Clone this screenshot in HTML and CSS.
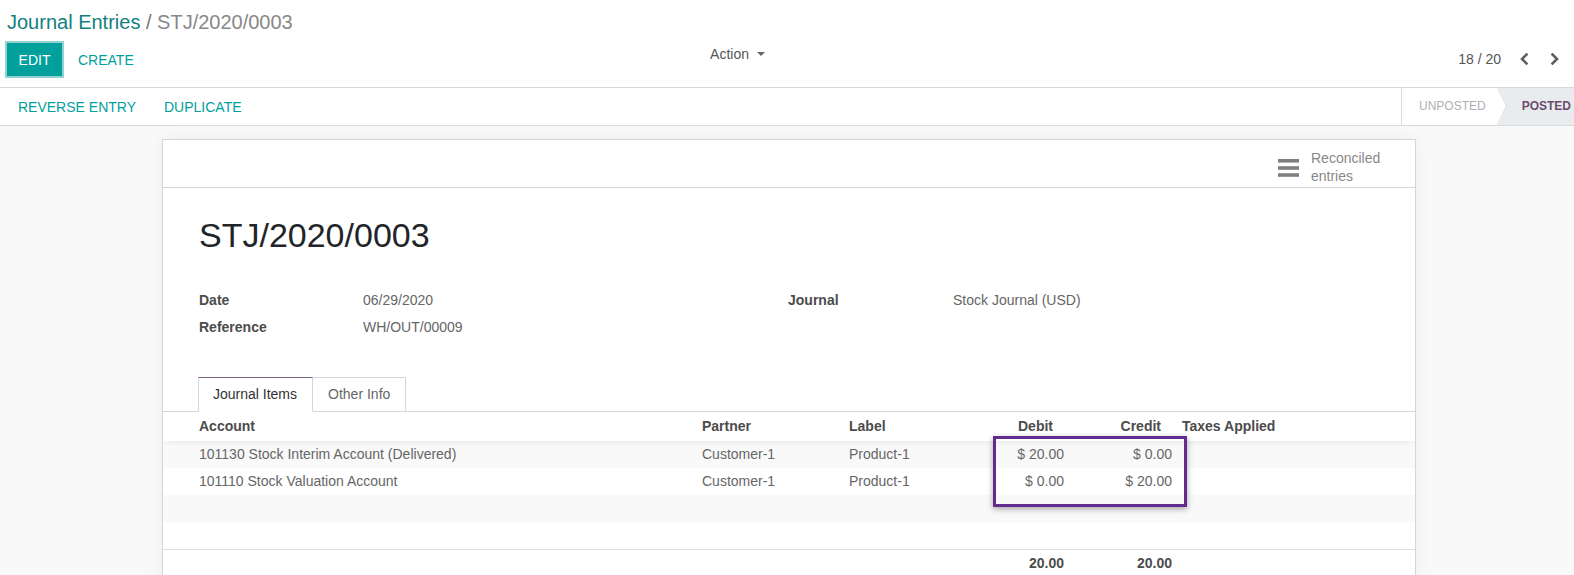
FILE: index.html
```html
<!DOCTYPE html>
<html lang="en">
<head>
<meta charset="utf-8">
<title>Journal Entries / STJ/2020/0003</title>
<link rel="stylesheet" href="styles.css">
</head>
<body>
<div class="cp">
  <div class="bc"><span class="bc-link">Journal Entries</span> / <span class="bc-cur">STJ/2020/0003</span></div>
  <div class="cp-row">
    <div class="cp-left">
      <div class="cp-btns">
        <button class="btn-edit">EDIT</button>
        <button class="btn-link">CREATE</button>
      </div>
      <div class="action">Action <span class="caret"></span></div>
    </div>
    <div class="cp-right">
      <span class="pager">18 / 20</span>
      <svg class="chev" width="10" height="12" viewBox="0 0 10 12"><polyline points="7.5,1.5 3,6 7.5,10.5" fill="none" stroke="#5f5f5f" stroke-width="2.6" stroke-linecap="square"/></svg>
      <svg class="chev chev-r" width="10" height="12" viewBox="0 0 10 12"><polyline points="2.5,1.5 7,6 2.5,10.5" fill="none" stroke="#5f5f5f" stroke-width="2.6" stroke-linecap="square"/></svg>
    </div>
  </div>
</div>
<div class="sbar">
  <div class="sbar-btns">
    <button class="btn-link sb">REVERSE ENTRY</button>
    <button class="btn-link sb">DUPLICATE</button>
  </div>
  <div class="status">
    <div class="st st-off">UNPOSTED</div>
    <div class="st st-on">POSTED</div>
  </div>
</div>
<div class="content">
  <div class="sheet">
    <div class="bbox">
      <div class="stat-btn">
        <svg class="bars" width="21" height="18" viewBox="0 0 21 18"><rect x="0" y="0" width="21" height="3.6" fill="#808080"/><rect x="0" y="7.2" width="21" height="3.6" fill="#808080"/><rect x="0" y="14.2" width="21" height="3.6" fill="#808080"/></svg>
        <div class="stat-txt">Reconciled<br>entries</div>
      </div>
    </div>
    <div class="sbody">
      <h1 class="title">STJ/2020/0003</h1>
      <div class="groups">
        <div class="grp">
          <div class="lbl">Date</div><div class="val">06/29/2020</div>
          <div class="lbl">Reference</div><div class="val">WH/OUT/00009</div>
        </div>
        <div class="grp">
          <div class="lbl">Journal</div><div class="val">Stock Journal (USD)</div>
        </div>
      </div>
    </div>
    <div class="tabs">
      <div class="tab tab-on">Journal Items</div>
      <div class="tab tab-off">Other Info</div>
    </div>
    <div class="tbl">
      <div class="tr th">
        <div>Account</div><div>Partner</div><div>Label</div><div class="num">Debit</div><div class="num">Credit</div><div class="tax">Taxes Applied</div>
      </div>
      <div class="tr odd">
        <div>101130 Stock Interim Account (Delivered)</div><div>Customer-1</div><div>Product-1</div><div class="num">$ 20.00</div><div class="num">$ 0.00</div><div class="tax"></div>
      </div>
      <div class="tr">
        <div>101110 Stock Valuation Account</div><div>Customer-1</div><div>Product-1</div><div class="num">$ 0.00</div><div class="num">$ 20.00</div><div class="tax"></div>
      </div>
      <div class="tr odd empty"></div>
      <div class="tr empty"></div>
      <div class="tr tf">
        <div></div><div></div><div></div><div class="num">20.00</div><div class="num">20.00</div><div class="tax"></div>
      </div>
      <div class="hl"></div>
    </div>
  </div>
</div>
</body>
</html>
```
FILE: styles.css
```css
html, body {
  margin: 0;
  padding: 0;
  height: 100%;
  overflow: hidden;
}
body {
  font-family: "Liberation Sans", Arial, sans-serif;
  font-size: 14px;
  color: #666666;
  background: #f9f9f9;
}
button {
  font-family: inherit;
  font-size: 14px;
  border: 0;
  background: none;
  cursor: pointer;
  padding: 0;
}

/* control panel */
.cp {
  background: #ffffff;
  border-bottom: 1px solid #d9d9d9;
  padding: 10px 0 0 7px;
  height: 77px;
  box-sizing: content-box;
}
.bc {
  font-size: 20px;
  line-height: 24px;
  color: #777777;
}
.bc-link { color: #12807e; }
.bc-cur { color: #888888; }
.cp-row {
  display: flex;
  margin-top: 9px;
  height: 35px;
}
.cp-left {
  width: 780px;
  display: flex;
  align-items: flex-start;
}
.cp-btns {
  display: flex;
  align-items: flex-start;
}
.btn-edit {
  background: #00a09d;
  color: #ffffff;
  height: 33px;
  width: 55px;
  box-shadow: 0 0 0 2px #92d3d1;
  text-align: center;
}
.btn-link {
  color: #00a09d;
  height: 33px;
  padding: 0 12px;
  margin-left: 4px;
}
.action {
  margin-left: auto;
  margin-right: 22px;
  margin-top: 1px;
  line-height: 20px;
  color: #555555;
  display: flex;
  align-items: center;
}
.caret {
  display: inline-block;
  width: 0;
  height: 0;
  border-left: 4px solid transparent;
  border-right: 4px solid transparent;
  border-top: 4px solid #666666;
  margin-left: 8px;
}
.cp-right {
  flex: 1;
  display: flex;
  justify-content: flex-end;
  align-items: flex-start;
  padding-right: 14px;
}
.pager {
  line-height: 20px;
  margin-top: 6px;
  color: #555555;
}
.chev {
  margin-top: 10px;
  margin-left: 18px;
}
.chev-r { margin-left: 21px; }

/* status bar */
.sbar {
  display: flex;
  background: #ffffff;
  border-bottom: 1px solid #d9d9d9;
  height: 37px;
}
.sbar-btns {
  display: flex;
  align-items: center;
  padding-left: 4px;
  flex: 1;
}
.btn-link.sb {
  height: 37px;
  padding: 0 14px;
  margin: 0;
}
.status {
  display: flex;
  border-left: 1px solid #dcdcdc;
  font-size: 12px;
}
.st {
  line-height: 37px;
  position: relative;
  white-space: nowrap;
}
.st-off {
  color: #aeb1b5;
  padding: 0 11px 0 17px;
  background: #ffffff;
  z-index: 1;
}
.st-off::before {
  content: "";
  position: absolute;
  right: -10px;
  top: 0;
  border-left: 10px solid #d5d8dc;
  border-top: 18.5px solid transparent;
  border-bottom: 18.5px solid transparent;
}
.st-off::after {
  content: "";
  position: absolute;
  right: -9px;
  top: 0;
  border-left: 9px solid #ffffff;
  border-top: 18.5px solid transparent;
  border-bottom: 18.5px solid transparent;
}
.st-on {
  background: #e9ecef;
  color: #6a4d6e;
  font-weight: bold;
  padding: 0 3px 0 25px;
}

/* content */
.content {
  padding-top: 13px;
}
.sheet {
  margin-left: 162px;
  width: 1254px;
  box-sizing: border-box;
  background: #ffffff;
  border: 1px solid #d3d7db;
  border-bottom: 0;
  box-shadow: 0 0 16px rgba(0, 0, 0, 0.05);
  min-height: 460px;
}
.bbox {
  height: 47px;
  border-bottom: 1px solid #d3d7db;
  display: flex;
  justify-content: flex-end;
}
.stat-btn {
  width: 137px;
  display: flex;
  align-items: center;
  margin-top: 9px;
  height: 36px;
}
.bars {
  flex: none;
  margin-top: 1px;
}
.stat-txt {
  margin-left: 12px;
  line-height: 18px;
  color: #888888;
}
.sbody {
  padding: 27px 0 0 36px;
}
.title {
  margin: 0;
  font-size: 34px;
  line-height: 40px;
  font-weight: normal;
  color: #212529;
}
.groups {
  display: grid;
  grid-template-columns: 589px 1fr;
  margin-top: 32px;
}
.grp {
  display: grid;
  grid-template-columns: 164px 1fr;
  grid-auto-rows: 27px;
  line-height: 27px;
  align-content: start;
}
.grp + .grp { grid-template-columns: 165px 1fr; }
.lbl {
  font-weight: bold;
  color: #4c4c4c;
}
.val { color: #666666; }

/* tabs */
.tabs {
  display: flex;
  margin-top: 36px;
  padding-left: 35px;
  border-bottom: 1px solid #d3d7db;
}
.tab {
  height: 33px;
  line-height: 33px;
  margin-bottom: -1px;
  background: #ffffff;
}
.tab-on {
  color: #333333;
  padding: 0 15px 0 14px;
  border: 1px solid #d3d7db;
  border-top-color: #7f6282;
  border-bottom-color: #ffffff;
}
.tab-off {
  color: #666666;
  border: 1px solid #d3d7db;
  border-left: 0;
  padding: 0 15px 0 15px;
}

/* table */
.tbl {
  position: relative;
}
.tr {
  display: grid;
  grid-template-columns: 503px 147px 141px 74px 108px 1fr;
  padding-left: 36px;
  height: 27px;
  line-height: 27px;
  white-space: nowrap;
}
.th {
  height: 29px;
  line-height: 29px;
  font-weight: bold;
  color: #4c4c4c;
  position: relative;
  z-index: 1;
  box-shadow: 0 4px 6px -3px rgba(0, 0, 0, 0.08);
  background: #ffffff;
}
.th .num { padding-right: 11px; }
.num { text-align: right; }
.tax { padding-left: 10px; }
.odd { background: #f9f9f9; }
.tf {
  border-top: 1px solid #dddddd;
  font-weight: bold;
  color: #4c4c4c;
  height: 28px;
}
.hl {
  position: absolute;
  left: 830px;
  top: 24px;
  width: 194px;
  height: 71px;
  box-sizing: border-box;
  border: 3px solid #632b8e;
  box-shadow: 0 2px 6px rgba(0, 0, 0, 0.35);
  z-index: 2;
}
```
